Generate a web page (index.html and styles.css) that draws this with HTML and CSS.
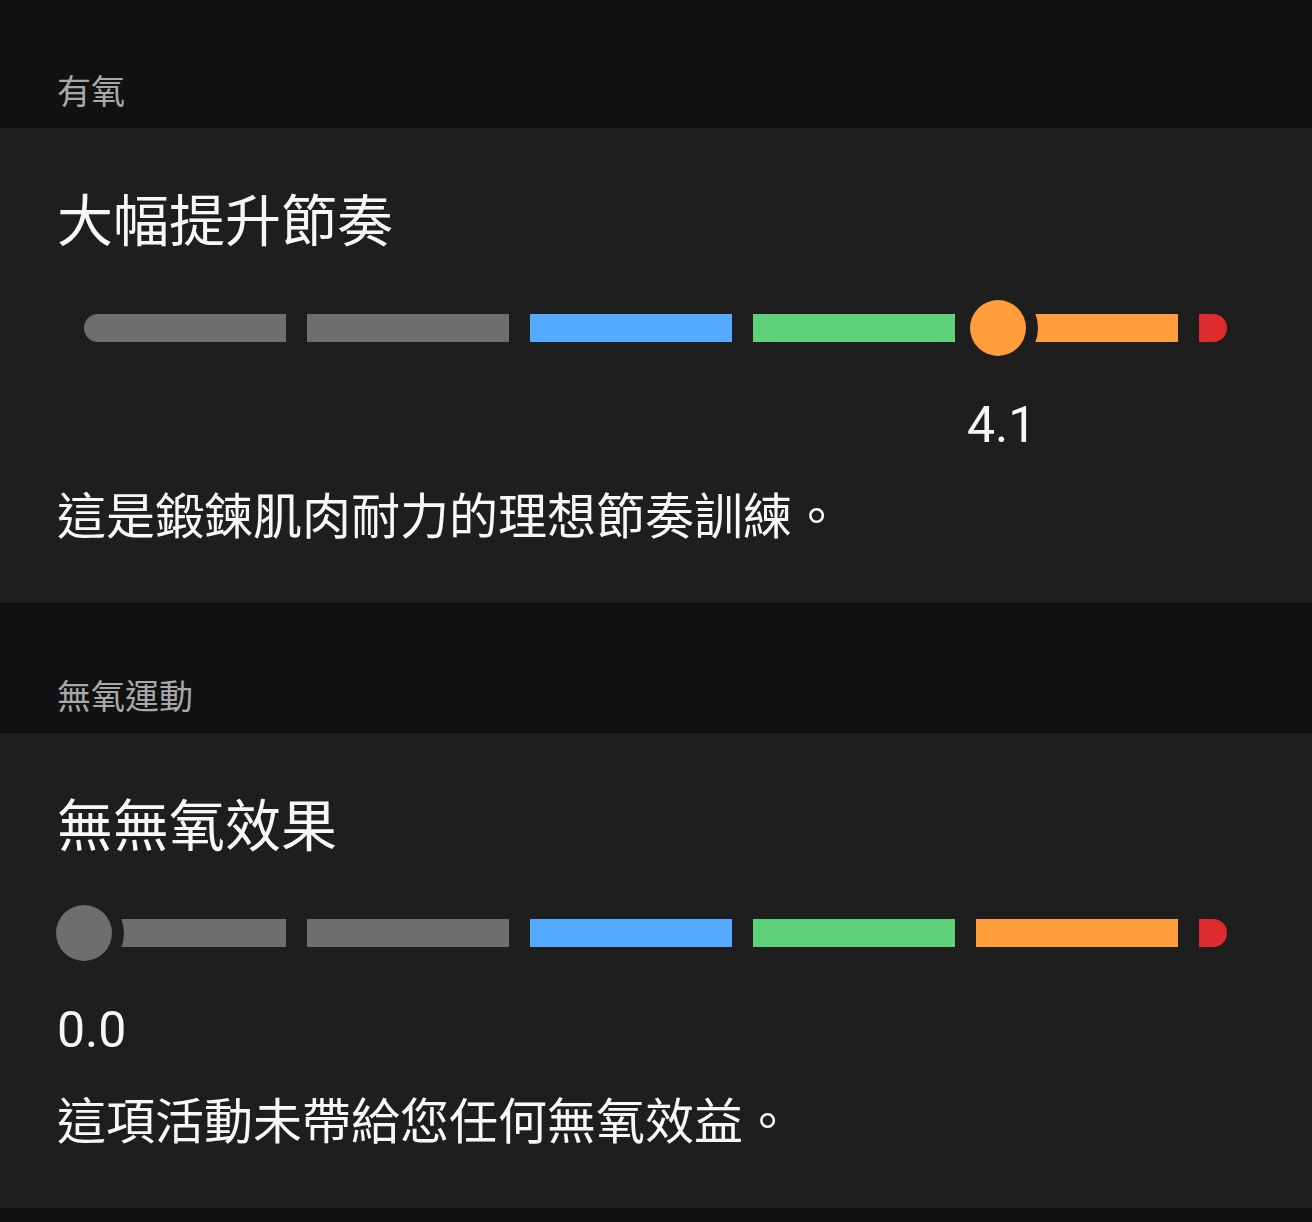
FILE: index.html
```html
<!DOCTYPE html>
<html lang="zh-Hant">
<head>
    <meta charset="UTF-8">
    <meta name="viewport" content="width=device-width, initial-scale=1.0">
    <title>訓練效果</title>
    <link rel="stylesheet" href="styles.css">
</head>
<body>

<div class="section-label">有氧</div>
<div class="card">
    <h2 class="card-title">大幅提升節奏</h2>
    <div class="scale">
        <div class="seg seg-first gray"></div>
        <div class="seg gray"></div>
        <div class="seg blue"></div>
        <div class="seg green"></div>
        <div class="seg orange"></div>
        <div class="seg seg-last red"></div>
        <!-- knob: left = value * 223 - 1 -->
        <div class="knob orange" style="left: 913px"></div>
    </div>
    <div class="value" style="margin-left: 910px">4.1</div>
    <p class="desc">這是鍛鍊肌肉耐力的理想節奏訓練。</p>
</div>

<div class="section-label section-label-tall">無氧運動</div>
<div class="card">
    <h2 class="card-title">無無氧效果</h2>
    <div class="scale">
        <div class="seg seg-first gray"></div>
        <div class="seg gray"></div>
        <div class="seg blue"></div>
        <div class="seg green"></div>
        <div class="seg orange"></div>
        <div class="seg seg-last red"></div>
        <div class="knob gray" style="left: -1px"></div>
    </div>
    <div class="value" style="margin-left: 0px">0.0</div>
    <p class="desc">這項活動未帶給您任何無氧效益。</p>
</div>

<div class="footer-gap"></div>

</body>
</html>
```

FILE: styles.css
```css
body { margin: 0; background: #111111; color: #f4f4f4; font-family: Roboto, "Noto Sans CJK TC", sans-serif; }

.section-label {
    padding: 72px 57px 16px;
    font-size: 34px;
    line-height: 40px;
    color: #a9a9a9;
}
.section-label-tall { padding-top: 74px; }

.card {
    background: #1e1e1e;
    padding: 61px 57px 55px;
}
.card-title {
    margin: 0;
    font-size: 56px;
    line-height: 66px;
    font-weight: 400;
    color: #f7f7f7;
}

.scale {
    position: relative;
    height: 56px;
    margin-top: 45px;
    padding-left: 27px;
    display: flex;
    align-items: center;
    gap: 21px;
}
.seg { width: 202px; height: 28px; flex: none; }
.seg-first { border-radius: 14px 0 0 14px; }
.seg-last { width: 28px; border-radius: 0 14px 14px 0; }

.gray { background: #6e6e6e; }
.blue { background: #55a9ff; }
.green { background: #5fd179; }
.orange { background: #ff9d3a; }
.red { background: #e02b2e; }

.knob {
    position: absolute;
    top: 0;
    width: 56px;
    height: 56px;
    border-radius: 50%;
    box-shadow: 0 0 0 12px #1e1e1e;
}

.value {
    margin-top: 41px;
    font-size: 50px;
    line-height: 56px;
    color: #f7f7f7;
}

.desc {
    margin: 35px 0 0;
    font-size: 49px;
    line-height: 60px;
    color: #f7f7f7;
}

.footer-gap { height: 15px; }
```
